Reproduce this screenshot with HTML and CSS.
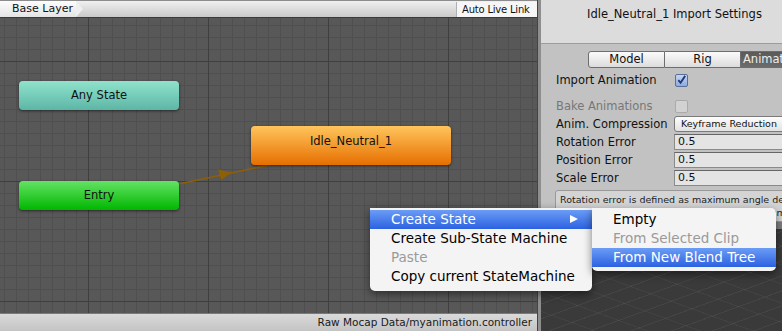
FILE: index.html
```html
<!DOCTYPE html>
<html lang="en">
<head>
  <meta charset="UTF-8">
  <title>Animator</title>
  <link rel="stylesheet" href="styles.css">
</head>
<body>
  <div class="app">
    <div class="graph">
      <div class="topbar">
        <div class="crumb">Base Layer</div>
        <div class="live-link">Auto Live Link</div>
      </div>
      <div class="canvas">
        <svg class="links" viewBox="0 17 537 296" width="537" height="296">
          <line x1="179" y1="184" x2="274" y2="164" stroke="#8e5f05" stroke-width="1.5"/>
          <polygon points="232,172.6 218,169.5 221,180" fill="#8e5f05"/>
        </svg>
        <div class="node any-state">Any State</div>
        <div class="node entry">Entry</div>
        <div class="node idle">Idle_Neutral_1</div>
      </div>
      <div class="statusbar">Raw Mocap Data/myanimation.controller</div>
    </div>
    <div class="divider"></div>
    <div class="panel">
      <div class="panel-head">Idle_Neutral_1 Import Settings</div>
      <div class="tabs">
        <div class="tab first">Model</div>
        <div class="tab">Rig</div>
        <div class="tab active">Animations</div>
      </div>
      <div class="row row-import">
        <span class="label">Import Animation</span>
        <span class="check checked">
          <svg viewBox="0 0 12 12" width="12" height="12"><path d="M2.5 6.2 L5 9 L10 1.5" fill="none" stroke="#1f3a78" stroke-width="2"/></svg>
        </span>
      </div>
      <div class="row row-bake disabled">
        <span class="label">Bake Animations</span>
        <span class="check"></span>
      </div>
      <div class="row">
        <span class="label">Anim. Compression</span>
        <span class="dropdown">Keyframe Reduction</span>
      </div>
      <div class="row">
        <span class="label">Rotation Error</span>
        <span class="field">0.5</span>
      </div>
      <div class="row">
        <span class="label">Position Error</span>
        <span class="field">0.5</span>
      </div>
      <div class="row">
        <span class="label">Scale Error</span>
        <span class="field">0.5</span>
      </div>
      <div class="helpbox">
        <div>Rotation error is defined as maximum angle deviation allowed</div>
        <div>in degrees, for others it is defined as maximum distance/delta deviation</div>
      </div>
      <div class="preview-bar"></div>
      <div class="preview"></div>
    </div>

    <div class="menu main-menu">
      <div class="item hover">Create State<span class="arrow"></span></div>
      <div class="item">Create Sub-State Machine</div>
      <div class="item off">Paste</div>
      <div class="item">Copy current StateMachine</div>
    </div>
    <div class="menu sub-menu">
      <div class="item">Empty</div>
      <div class="item off">From Selected Clip</div>
      <div class="item hover">From New Blend Tree</div>
    </div>
  </div>
</body>
</html>
```

FILE: styles.css
```css
body {
  margin: 0;
  font-family: "DejaVu Sans", Verdana, sans-serif;
  background: #3b3b3b;
}
.app {
  position: relative;
  width: 782px;
  height: 331px;
  display: flex;
  overflow: hidden;
}
.graph {
  width: 537px;
  display: flex;
  flex-direction: column;
}
.topbar {
  height: 16px;
  border-top: 1px solid #8c8c8c;
  background: linear-gradient(#f0f0f0, #c9c9c9);
  display: flex;
  justify-content: space-between;
}
.crumb {
  position: relative;
  width: 64px;
  padding-left: 12px;
  font-size: 11px;
  line-height: 16px;
  color: #111;
  background: linear-gradient(#fdfdfd, #e4e4e4);
}
.crumb::after {
  content: "";
  position: absolute;
  right: -7px;
  top: 0;
  border-left: 7px solid #efefef;
  border-top: 8px solid transparent;
  border-bottom: 8px solid transparent;
}
.live-link {
  margin-top: 1px;
  width: 75px;
  padding-left: 5px;
  font-size: 10px;
  letter-spacing: -0.2px;
  line-height: 15px;
  white-space: nowrap;
  color: #111;
  background: #f6f6f6;
  border-left: 1px solid #b0b0b0;
}
.canvas {
  position: relative;
  flex: 1;
  background-color: #585858;
  background-image:
    linear-gradient(to right, #3f3f3f 1px, transparent 1px),
    linear-gradient(to bottom, #3f3f3f 1px, transparent 1px),
    linear-gradient(to right, #4f4f4f 1px, transparent 1px),
    linear-gradient(to bottom, #4f4f4f 1px, transparent 1px);
  background-size: 120px 120px, 120px 120px, 12px 12px, 12px 12px;
  background-position: 88px 43px, 88px 43px, 4px 7px, 4px 7px;
  border-top: 1px solid #3a3a3a;
}
.links {
  position: absolute;
  left: 0;
  top: -1px;
}
.node {
  position: absolute;
  border-radius: 4px;
  font-size: 11.5px;
  text-align: center;
  color: #111;
  box-shadow: 0 1px 3px rgba(0, 0, 0, 0.55);
}
.any-state {
  left: 19px;
  top: 63px;
  width: 160px;
  height: 29px;
  line-height: 29px;
  background: linear-gradient(#8fe3cc, #5db6a6);
}
.entry {
  left: 19px;
  top: 163px;
  width: 160px;
  height: 29px;
  line-height: 29px;
  background: linear-gradient(#64e364, #00b700);
}
.idle {
  left: 251px;
  top: 108px;
  width: 200px;
  height: 39px;
  line-height: 30px;
  background: linear-gradient(#ffc55c, #e66f00);
}
.statusbar {
  height: 17px;
  border-top: 1px solid #7a7a7a;
  background: linear-gradient(#dadada, #c4c4c4);
  font-size: 10.5px;
  line-height: 17px;
  text-align: right;
  padding-right: 5px;
  color: #1a1a1a;
}
.divider {
  width: 3px;
  background: #8e8e8e;
  border-left: 1px solid #444;
}
.panel {
  width: 241px;
  display: flex;
  flex-direction: column;
  background: #c2c2c2;
  overflow: hidden;
}
.panel-head {
  height: 44px;
  flex-shrink: 0;
  background: #dcdcdc;
  border-bottom: 1px solid #9c9c9c;
  padding-left: 46px;
  padding-top: 6px;
  box-sizing: border-box;
  font-size: 11.5px;
  line-height: 16px;
  color: #111;
  white-space: nowrap;
}
.tabs {
  display: flex;
  margin: 7px 0 0 47px;
  height: 17px;
  flex-shrink: 0;
}
.tab {
  width: 75px;
  flex-shrink: 0;
  font-size: 11.5px;
  line-height: 15px;
  text-align: center;
  color: #111;
  background: linear-gradient(#fbfbfb, #dcdcdc);
  border: 1px solid #6e6e6e;
  border-left: none;
}
.tab.first {
  border-left: 1px solid #6e6e6e;
  border-radius: 3px 0 0 3px;
}
.tab.active {
  background: linear-gradient(#5a5a5a, #6c6c6c);
  color: #eee;
  text-align: left;
  padding-left: 2px;
}
.row {
  display: flex;
  align-items: center;
  height: 16px;
  margin-top: 2px;
  padding-left: 15px;
  flex-shrink: 0;
  white-space: nowrap;
}
.row-import {
  margin-top: 4px;
}
.row-bake {
  margin-top: 10px;
}
.label {
  width: 118px;
  flex-shrink: 0;
  font-size: 11.5px;
  color: #111;
}
.disabled .label {
  color: #777;
}
.check {
  width: 11px;
  height: 11px;
  margin-left: 1px;
  border: 1px solid #8a8a8a;
  border-radius: 2px;
  background: linear-gradient(#f4f4f4, #d8d8d8);
  display: flex;
  align-items: center;
  justify-content: center;
}
.check.checked {
  border-color: #5a6f96;
  background: linear-gradient(#c7d7f2, #8eaae0);
}
.disabled .check {
  border-color: #aaa;
  background: #d2d2d2;
}
.dropdown {
  width: 120px;
  height: 14px;
  flex-shrink: 0;
  border: 1px solid #7a7a7a;
  border-radius: 3px;
  background: linear-gradient(#fdfdfd, #e2e2e2);
  font-size: 9.5px;
  line-height: 14px;
  padding-left: 6px;
  color: #111;
}
.field {
  width: 120px;
  height: 14px;
  flex-shrink: 0;
  border: 1px solid #8a8a8a;
  border-top-color: #666;
  background: #e4e4e4;
  font-size: 11px;
  line-height: 14px;
  padding-left: 3px;
  color: #111;
}
.helpbox {
  margin: 4px 0 0 14px;
  width: 320px;
  height: 26px;
  flex-shrink: 0;
  padding: 2px 4px;
  border: 1px solid #999;
  border-radius: 3px;
  background: #d4d4d4;
  font-size: 9.5px;
  line-height: 13px;
  color: #222;
  white-space: nowrap;
  overflow: hidden;
}
.preview-bar {
  height: 7px;
  flex-shrink: 0;
  background: #7e7e7e;
}
.preview {
  flex: 1;
  background-color: #3a3a3a;
  background-image:
    repeating-linear-gradient(160deg, rgba(255, 255, 255, 0.05) 0 1px, transparent 1px 14px),
    repeating-linear-gradient(20deg, rgba(255, 255, 255, 0.04) 0 1px, transparent 1px 18px);
}
.menu {
  position: absolute;
  top: 208px;
  padding: 2px 0 5px;
  background: #f4f4f4;
  border-radius: 0 0 5px 5px;
  box-shadow: 0 3px 9px rgba(0, 0, 0, 0.5);
  font-size: 13.5px;
}
.main-menu {
  left: 370px;
  width: 222px;
}
.sub-menu {
  left: 592px;
  width: 184px;
  padding-bottom: 4px;
  border-radius: 0 5px 5px 5px;
}
.item {
  position: relative;
  height: 19px;
  line-height: 19px;
  padding-left: 21px;
  color: #000;
  white-space: nowrap;
}
.item.off {
  color: #9a9a9a;
}
.item.hover {
  color: #fff;
  background: linear-gradient(#6b9cf6, #2c62e0);
}
.arrow {
  position: absolute;
  right: 14px;
  top: 5px;
  border-left: 8px solid #fff;
  border-top: 4.5px solid transparent;
  border-bottom: 4.5px solid transparent;
}
```
